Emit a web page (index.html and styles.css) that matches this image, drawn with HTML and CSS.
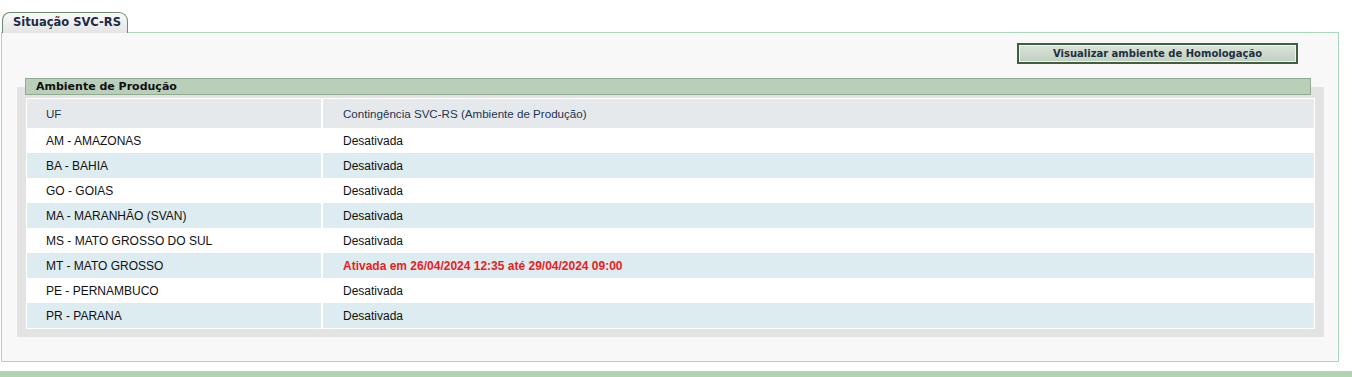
FILE: index.html
```html
<!DOCTYPE html>
<html lang="pt-BR">
<head>
<meta charset="utf-8">
<title>Situação SVC-RS</title>
<link rel="stylesheet" href="styles.css">
</head>
<body>
<div class="page">
  <div class="tabs">
    <div class="tab">Situação SVC-RS</div>
  </div>
  <div class="panel">
    <div class="actions">
      <button class="btn" type="button">Visualizar ambiente de Homologação</button>
    </div>
    <div class="section">
      <div class="section-title">Ambiente de Produção</div>
      <table class="grid">
        <thead>
          <tr><th class="c1">UF</th><th>Contingência SVC-RS (Ambiente de Produção)</th></tr>
        </thead>
        <tbody>
          <tr><td class="c1">AM - AMAZONAS</td><td>Desativada</td></tr>
          <tr class="alt"><td class="c1">BA - BAHIA</td><td>Desativada</td></tr>
          <tr><td class="c1">GO - GOIAS</td><td>Desativada</td></tr>
          <tr class="alt"><td class="c1">MA - MARANHÃO (SVAN)</td><td>Desativada</td></tr>
          <tr><td class="c1">MS - MATO GROSSO DO SUL</td><td>Desativada</td></tr>
          <tr class="alt"><td class="c1">MT - MATO GROSSO</td><td class="on">Ativada em 26/04/2024 12:35 até 29/04/2024 09:00</td></tr>
          <tr><td class="c1">PE - PERNAMBUCO</td><td>Desativada</td></tr>
          <tr class="alt"><td class="c1">PR - PARANA</td><td>Desativada</td></tr>
        </tbody>
      </table>
    </div>
  </div>
  <div class="footer-bar"></div>
</div>
</body>
</html>
```
FILE: styles.css
```css
html, body {
  margin: 0;
  padding: 0;
  background: #ffffff;
}
.page {
  font-family: "DejaVu Sans", Verdana, sans-serif;
  width: 1352px;
  height: 377px;
  overflow: hidden;
  position: relative;
}
.tabs {
  display: flex;
  padding: 12px 0 0 2px;
  height: 20px;
}
.tab {
  box-sizing: border-box;
  width: 126px;
  height: 21px;
  border: 1px solid #6a8e6a;
  border-bottom: none;
  border-radius: 8px 9px 0 0;
  background: linear-gradient(#fafafa, #e4e4e4);
  color: #1d2b45;
  font-weight: bold;
  font-size: 11.5px;
  line-height: 19px;
  padding-left: 10px;
  position: relative;
  z-index: 1;
}
.panel {
  box-sizing: border-box;
  margin-left: 1px;
  width: 1338px;
  height: 330px;
  border: 1px solid #a8d8bc;
  background: #f8f8f8;
  padding-top: 10px;
}
.actions {
  display: flex;
  justify-content: flex-end;
  padding-right: 40px;
}
.btn {
  box-sizing: border-box;
  width: 281px;
  height: 21px;
  border: 2px solid #3f5f3f;
  box-shadow: inset 0 0 0 1px #f0f4f0;
  background: linear-gradient(#dbe4db, #bfcfbf);
  font-family: "DejaVu Sans", Verdana, sans-serif;
  font-weight: bold;
  font-size: 10px;
  color: #1f2f3f;
  padding: 0;
  margin: 0;
}
.section {
  margin: 23px 14px 0 15px;
  background: #e3e3e3;
  padding: 0 9px 8px 9px;
}
.section-title {
  box-sizing: border-box;
  position: relative;
  top: -9px;
  margin: 0 4px 0 -1px;
  height: 17px;
  border: 1px solid #91ab91;
  background: #b9cfb9;
  font-weight: bold;
  font-size: 11px;
  line-height: 15px;
  color: #111;
  padding-left: 10px;
  margin-bottom: -6px;
}
.grid {
  width: 100%;
  border-collapse: separate;
  border-spacing: 0;
  border: 1px solid #ffffff;
  font-family: "Liberation Sans", Arial, sans-serif;
  font-size: 12px;
  color: #111;
  background: #ffffff;
}
.grid th {
  background: #e5e9ec;
  font-weight: normal;
  font-size: 11.6px;
  color: #1d3550;
  text-align: left;
  height: 29px;
  padding: 0 0 0 20px;
}
.grid td {
  height: 25px;
  padding: 0 0 0 20px;
}
.grid .c1 {
  width: 275px;
  border-right: 2px solid #ffffff;
  padding-left: 19px;
}
.grid tr.alt td {
  background: #dcecf0;
}
.grid td.on {
  color: #ee1c1c;
  font-weight: bold;
}
.footer-bar {
  position: absolute;
  left: 0;
  right: 0;
  top: 371px;
  height: 6px;
  background: #b3d4b3;
}
```
